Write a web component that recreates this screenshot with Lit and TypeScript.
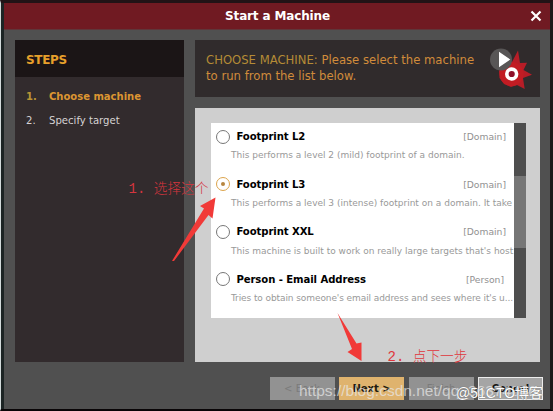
import { LitElement, html, css, svg } from "lit";
import { customElement, state } from "lit/decorators.js";
import { classMap } from "lit/directives/class-map.js";

interface Machine {
  name: string;
  kind: string;
  text: string;
  tight?: boolean;
}

const MACHINES: Machine[] = [
  { name: "Footprint L2", kind: "[Domain]", text: "This performs a level 2 (mild) footprint of a domain." },
  { name: "Footprint L3", kind: "[Domain]", text: "This performs a level 3 (intense) footprint on a domain. It take" },
  { name: "Footprint XXL", kind: "[Domain]", text: "This machine is built to work on really large targets that's host:" },
  { name: "Person - Email Address", kind: "[Person]", text: "Tries to obtain someone's email address and sees where it's u...", tight: true },
];

@customElement("machine-row")
export class MachineRow extends LitElement {
  static properties = { machine: { attribute: false }, selected: { type: Boolean } };
  declare machine: Machine;
  declare selected: boolean;

  static styles = css`
    :host { display: block; height: 47.6px; box-sizing: border-box; padding: 6px 0 0 5px; }
    .head { display: flex; align-items: center; height: 15px; }
    .radio {
      width: 14px; height: 14px; box-sizing: border-box; border: 1.4px solid #777; border-radius: 50%;
      display: grid; place-items: center; flex: none; margin-right: 6.4px;
    }
    .radio.on { border-color: #dca44c; }
    .radio.on::after { content: ""; width: 4px; height: 4px; border-radius: 50%; background: #b78640; }
    .name { flex: 1; font-weight: bold; font-size: 10.1px; letter-spacing: -0.08px; color: #000; }
    .kind { font-size: 9.2px; color: #919191; padding-right: 8px; }
    .kind.person { padding-right: 10px; }
    .text { margin: 4.4px 0 0 15px; font-size: 9px; line-height: 14px; color: #999; white-space: nowrap; }
    .text.tight { letter-spacing: -0.09px; }
  `;

  render() {
    const m = this.machine;
    return html`
      <div class="head">
        <span class=${classMap({ radio: true, on: this.selected })}></span>
        <span class="name">${m.name}</span>
        <span class=${classMap({ kind: true, person: m.kind === "[Person]" })}>${m.kind}</span>
      </div>
      <div class=${classMap({ text: true, tight: !!m.tight })}>${m.text}</div>
    `;
  }
}

@customElement("app-root")
export class AppRoot extends LitElement {
  @state() private selected = 1;

  static styles = css`
    :host {
      display: block; position: relative; width: 553px; height: 411px; overflow: hidden;
      box-sizing: border-box; background: linear-gradient(to right, #1c2424 3px, #505050 3px);
      font-family: "DejaVu Sans", sans-serif;
      border-style: solid; border-width: 3px 3px 2px 1px; border-color: #211316 #1c1a1a #090507 #d3dada;
      padding-left: 3px;
    }
    .title {
      height: 27px; display: flex; align-items: center; color: #fff; background: #701a22;
      font-size: 12px; font-weight: bold; border-bottom: 1px solid #60363a; box-sizing: border-box;
    }
    .title span { flex: 1; text-align: center; padding-left: 21px; letter-spacing: -0.15px; }
    .title svg { width: 12px; height: 12px; margin-right: 8px; }
    .content { display: grid; grid-template-columns: 169px 345px; column-gap: 11px; padding: 10px 0 0 11px; height: 322px; }
    .steps { background: #322b2d; }
    .steps h2 {
      margin: 0; height: 37px; padding-left: 11px; background: #1b1516; color: #e7a02b;
      font-size: 12px; line-height: 40px; letter-spacing: -0.35px;
    }
    .step { display: flex; padding-left: 11px; height: 24.5px; line-height: 24.5px; font-size: 10.1px; color: #d7d3d4; }
    .step:first-of-type { margin-top: 7.5px; }
    .step i { width: 23px; font-style: normal; }
    .step.on { color: #dc9632; font-weight: bold; font-size: 10px; }
    .step.on i { color: #b99535; }
    .main { display: grid; grid-template: 57px 254px / minmax(0, 1fr); row-gap: 11px; }
    .intro { background: #302b2c; display: flex; padding-left: 11px; }
    .intro p { margin: 12px 0 0; flex: 1; min-width: 0; color: #d18c3b; font-size: 11.65px; line-height: 16px; white-space: nowrap; }
    .intro em { font-style: normal; color: #b58b36; }
    .intro svg { flex: none; width: 46px; height: 50px; margin-top: 4px; overflow: visible; }
    .panel { background: #cfcfcf; padding: 15px 14px 0 16px; }
    .list { display: flex; height: 195px; background: #fff; }
    .rows { flex: 1; min-width: 0; overflow: hidden; }
    .bar { flex: none; width: 12px; background: #4e4e4e; padding-top: 53px; box-sizing: border-box; }
    .thumb { height: 72px; background: #767676; }
    .buttons { display: flex; gap: 4.5px; padding: 15px 0 0 265.5px; }
    .btn {
      width: 65px; height: 23px; box-sizing: border-box; display: grid; place-items: center;
      background: #929292; color: #7b7b7b; font-size: 10px;
    }
    .btn.next { background: #dfb36e; color: #211a10; font-weight: bold; }
    .btn.cancel { background: #a5a5a5; border: 1px solid #ececec; color: #151515; font-weight: bold; }
    .arrows { position: absolute; left: -1px; top: -3px; width: 553px; height: 411px; }
    .note, .mark { position: absolute; white-space: pre; }
    .note { color: #df363c; font: 14px/18px "Liberation Mono", "Noto Sans CJK SC", sans-serif; }
    .note b { font: 300 13.7px/18px "Noto Sans CJK SC", sans-serif; }
    .n1 { left: 127.5px; top: 175px; color: #d5353e; }
    .n2 { left: 386.5px; top: 343px; }
    .mark { font: 15.5px/18px "Liberation Sans", "Noto Sans CJK SC", sans-serif; color: #e8e8e8b8; }
    .m1 { left: 298px; top: 379px; }
    .m2 { left: 455px; top: 381px; font-size: 14px; color: #fff; text-shadow: 0 0 1px #555; }
  `;

  private logo() {
    return svg`
      <path fill="#b61d27" d="M18 18 L24 6.500 L26 19 L33 18.700 L29.500 26 L38 30.700 L29 34 L30.700 45 L23 41 L17 43 L10 40 L5.500 34 L5 27 L9 20 Z" />
      <circle cx="17.700" cy="30" r="12" fill="#c21c23" />
      <circle cx="17.700" cy="30" r="4.900" fill="#8f1029" stroke="#fff" stroke-width="3.600" />
      <circle cx="7" cy="15.500" r="11" fill="#585656" />
      <path d="M5 7.700 L16.300 15.500 L5 23.300 Z" fill="#fff" />
    `;
  }

  render() {
    return html`
      <div class="title">
        <span>Start a Machine</span>
        <svg viewBox="0 0 12 12"><path d="M1.5 1.5 L10.5 10.5 M10.5 1.5 L1.5 10.5" stroke="#fff" stroke-width="2.2" /></svg>
      </div>
      <div class="content">
        <div class="steps">
          <h2>STEPS</h2>
          <div class="step on"><i>1.</i><span>Choose machine</span></div>
          <div class="step"><i>2.</i><span>Specify target</span></div>
        </div>
        <div class="main">
          <div class="intro">
            <p><em>CHOOSE MACHINE:</em> Please select the machine<br />to run from the list below.</p>
            <svg viewBox="0 0 46 50">${this.logo()}</svg>
          </div>
          <div class="panel">
            <div class="list">
              <div class="rows">
                ${MACHINES.map((m, i) => html`
                  <machine-row .machine=${m} ?selected=${i === this.selected} @click=${() => (this.selected = i)}></machine-row>
                `)}
              </div>
              <div class="bar"><div class="thumb"></div></div>
            </div>
          </div>
        </div>
      </div>
      <div class="buttons">
        <div class="btn">&lt; Back</div>
        <div class="btn next">Next &gt;</div>
        <div class="btn">Finish</div>
        <div class="btn cancel">Cancel</div>
      </div>
      <svg class="arrows" viewBox="0 0 553 411" fill="#f13a38">
        <path d="M172 261 L204 208.500 L200 206 L215.500 197.500 L212.500 218.500 L208.500 215 L174 261 Z" />
        <path d="M337.500 313 L356.500 343.500 L361.500 342.500 L361.500 361 L347.500 352 L352 349 Z" />
      </svg>
      <div class="note n1">1. <b>选择这个</b></div>
      <div class="note n2">2. <b>点下一步</b></div>
      <div class="mark m1">https://blog.csdn.net/qq_36374896</div>
      <div class="mark m2">@51CTO博客</div>
    `;
  }
}
